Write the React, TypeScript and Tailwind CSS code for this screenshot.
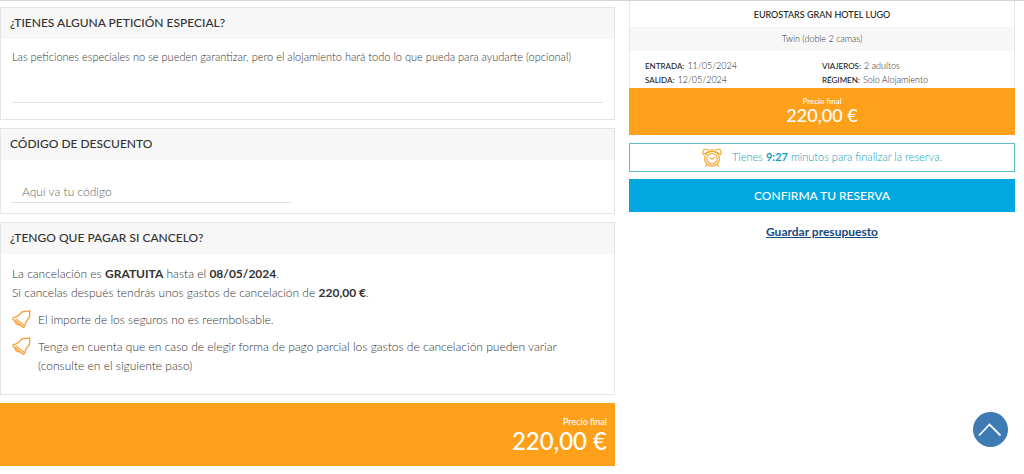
import type { ReactNode } from "react";

function Card({ title, children }: { title: string; children: ReactNode }) {
  return (
    <section className="border border-[#e4e4e4] bg-white">
      <h2 className="bg-[#f7f7f7] px-[9px] pt-[5px] pb-1.5 text-[12px] leading-5 font-medium text-[#333]">
        {title}
      </h2>
      {children}
    </section>
  );
}

function BellIcon() {
  return (
    <svg
      viewBox="0 0 20 20"
      className="h-5 w-5 shrink-0"
      fill="none"
      stroke="#f7a540"
      strokeWidth="1.4"
      strokeLinejoin="round"
      strokeLinecap="round"
      aria-hidden="true"
    >
      <path d="M1.2 7.6 C5 7.2 7 5.6 8.6 3.2 C10.6 .6 13.2 1.2 15.4 1.4 L17.8 .8 L17.6 3.2 C18 5.6 17.6 7.6 15.8 9.4 C13.6 11.6 13 13 12.8 16 L11.6 17.4 L1 9.2 Z" />
      <path d="M3.2 11 C3 13.4 5.4 15.4 8 14.8" />
      <path d="M4 9.2 L11.8 15" />
    </svg>
  );
}

function AlarmIcon() {
  return (
    <svg
      viewBox="0 0 20 20"
      className="h-5 w-5 shrink-0"
      fill="none"
      stroke="#f7a836"
      strokeWidth="1.2"
      strokeLinecap="round"
      strokeLinejoin="round"
      aria-hidden="true"
    >
      <circle cx="10" cy="10.8" r="7.4" />
      <circle cx="10" cy="10.8" r="5.2" />
      <path d="M8 9.8 L10 11.4 L12.2 9.6" />
      <path d="M1.6 6.6 C.2 4.4 .8 1.9 3 1.4 C4.8 1 6.4 1.8 7.2 3 Z" />
      <path d="M18.4 6.6 C19.8 4.4 19.2 1.9 17 1.4 C15.2 1 13.6 1.8 12.8 3 Z" />
      <path d="M8.8 1.8 H11.2 M10 1.8 V3.4" />
      <path d="M4.6 16.6 L3.6 18.2 M15.4 16.6 L16.4 18.2" />
    </svg>
  );
}

function Detail({ label, value }: { label: string; value: string }) {
  return (
    <div className="flex items-baseline gap-[3px]">
      <dt className="text-[8px] font-medium text-[#222]">{label}</dt>
      <dd className="text-[9px] font-light text-[#222]">{value}</dd>
    </div>
  );
}

export default function App() {
  return (
    <div className="border-t border-[#d4d4d4] bg-white font-['Lato',sans-serif] text-[#333]">
      <div className="grid grid-cols-[615fr_386fr] items-start gap-[14px] pr-[9px]">
        <main className="flex flex-col gap-2 pt-1.5">
          <Card title="¿TIENES ALGUNA PETICIÓN ESPECIAL?">
            <div className="px-[11px] pt-2.5 pb-4">
              <textarea
                aria-label="Petición especial"
                placeholder="Las peticiones especiales no se pueden garantizar, pero el alojamiento hará todo lo que pueda para ayudarte (opcional)"
                className="block h-[54px] w-full resize-none border-b border-[#e2e2e2] text-[11px] leading-4 font-light outline-none placeholder:text-[#333]"
              />
            </div>
          </Card>

          <Card title="CÓDIGO DE DESCUENTO">
            <div className="px-2.5 pt-[21px] pb-2.5">
              <input
                type="text"
                aria-label="Código de descuento"
                placeholder="Aquí va tu código"
                className="block h-[22px] w-[280px] max-w-full border-b border-[#dedede] px-[11px] text-[12px] font-light outline-none placeholder:text-[#666]"
              />
            </div>
          </Card>

          <Card title="¿TENGO QUE PAGAR SI CANCELO?">
            <div className="px-[11px] pt-2.5 pb-[19px] text-[12px] leading-[19px] font-light">
              <p>
                La cancelación es <strong className="font-bold">GRATUITA</strong> hasta el{" "}
                <strong className="font-bold">08/05/2024</strong>.
              </p>
              <p>
                Si cancelas después tendrás unos gastos de cancelación de{" "}
                <strong className="font-bold">220,00 €</strong>.
              </p>
              <ul className="mt-2 flex flex-col gap-[7px]">
                <li className="flex items-start gap-1.5">
                  <BellIcon />
                  <span>El importe de los seguros no es reembolsable.</span>
                </li>
                <li className="flex items-start gap-1.5">
                  <BellIcon />
                  <span>
                    Tenga en cuenta que en caso de elegir forma de pago parcial los gastos de cancelación
                    pueden variar
                    <br />
                    (consulte en el siguiente paso)
                  </span>
                </li>
              </ul>
            </div>
          </Card>

          <div className="bg-[#ffa01a] px-2 pt-[13px] pb-3 text-right text-white">
            <p className="text-[9px] leading-3 font-medium">Precio final</p>
            <p className="text-[24px] leading-[26px] font-medium">220,00 €</p>
          </div>
        </main>

        <aside>
          <section className="border-x border-[#e8e8e8] text-center">
            <h2 className="pt-[7px] pb-[5px] text-[9px] leading-[14px] font-medium text-[#222]">
              EUROSTARS GRAN HOTEL LUGO
            </h2>
            <p className="bg-[#f7f7f7] py-1 text-[9px] leading-4 font-light">Twin (doble 2 camas)</p>
            <dl className="grid grid-cols-[177fr_177fr] px-[15px] pt-2 pb-px leading-[13px]">
              <Detail label="ENTRADA:" value="11/05/2024" />
              <Detail label="VIAJEROS:" value="2 adultos" />
              <Detail label="SALIDA:" value="12/05/2024" />
              <Detail label="RÉGIMEN:" value="Solo Alojamiento" />
            </dl>
          </section>
          <div className="bg-[#ffa01a] pt-2 pb-2.5 text-center text-white">
            <p className="text-[8px] leading-[10px] font-medium">Precio final</p>
            <p className="text-[18px] leading-[19px] font-medium">220,00 €</p>
          </div>

          <div className="mt-2 flex h-[29px] items-center justify-center gap-2.5 border border-[#5fbacb] text-[11px] font-light text-[#0f9dbf]">
            <AlarmIcon />
            <p>
              Tienes <strong className="font-bold">9:27</strong> minutos para finalizar la reserva.
            </p>
          </div>

          <button
            type="button"
            className="mt-[7px] block h-[33px] w-full bg-[#00a7e1] text-[12px] font-medium text-white"
          >
            CONFIRMA TU RESERVA
          </button>

          <div className="mt-3 text-center text-[12px] leading-4">
            <a href="#presupuesto" className="font-bold text-[#164a80] underline">
              Guardar presupuesto
            </a>
          </div>
        </aside>
      </div>

      <button
        type="button"
        aria-label="Volver arriba"
        className="fixed right-4 bottom-[27px] flex h-[35px] w-[35px] items-center justify-center rounded-full bg-[#3e7bb3]"
      >
        <svg viewBox="0 0 26 14" className="h-3.5 w-[26px]" fill="none" stroke="#fff" strokeWidth="1.8" aria-hidden="true">
          <path d="M1 12.5 L11.5 1.5 L22.5 12.5" />
        </svg>
      </button>
    </div>
  );
}
